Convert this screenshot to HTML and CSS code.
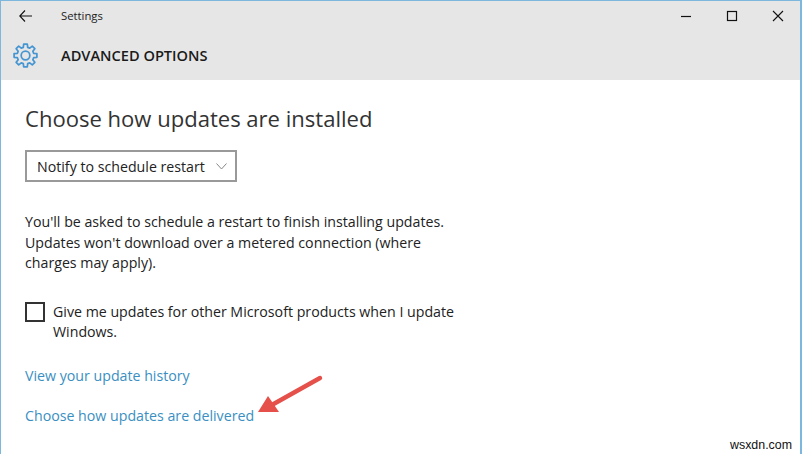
FILE: index.html
```html
<!DOCTYPE html>
<html lang="en">
<head>
  <meta charset="UTF-8" />
  <title>Settings</title>
  <link rel="stylesheet" href="styles.css">
</head>
<body>
  <div class="window">
    <div class="header">
      <div class="titlebar">
        <svg class="back-icon" width="13" height="12" viewBox="0 0 13 12"><path d="M6 .5.8 6 6 11.5M.8 6H13" fill="none" stroke="#111" stroke-width="1.1"/></svg>
        <span class="title">Settings</span>
        <div class="window-buttons">
          <svg width="12" height="12" viewBox="0 0 12 12"><path d="M1 6.5h10" stroke="#111" stroke-width="1.2"/></svg>
          <svg width="12" height="12" viewBox="0 0 12 12"><rect x="1.5" y="1.5" width="9" height="9" fill="none" stroke="#111" stroke-width="1.2"/></svg>
          <svg width="12" height="12" viewBox="0 0 12 12"><path d="M1 1l10 10M11 1 1 11" stroke="#111" stroke-width="1.1"/></svg>
        </div>
      </div>
      <div class="page-head">
        <svg class="gear-icon" width="25" height="25" viewBox="0 0 26 26"><path d="M10.72 4.5 11.12 1.15H14.88L15.28 4.5 17.4 5.38 20.05 3.29 22.71 5.95 20.62 8.6 21.5 10.72 24.85 11.12V14.88L21.5 15.28 20.62 17.4 22.71 20.05 20.05 22.71 17.4 20.62 15.28 21.5 14.88 24.85H11.12L10.72 21.5 8.6 20.62 5.95 22.71 3.29 20.05 5.38 17.4 4.5 15.28 1.15 14.88V11.12L4.5 10.72 5.38 8.6 3.29 5.95 5.95 3.29 8.6 5.38z" fill="none" stroke="#4595d2" stroke-width="1.8" stroke-linejoin="round"/><circle cx="13" cy="13" r="4.5" fill="none" stroke="#4595d2" stroke-width="1.8"/></svg>
        <span class="page-title">ADVANCED OPTIONS</span>
      </div>
    </div>

    <div class="content">
      <h1>Choose how updates are installed</h1>
      <div class="dropdown">
        <span>Notify to schedule restart</span>
        <svg width="11" height="7" viewBox="0 0 11 7"><path d="M.5 .5l5 5.5 5-5.5" fill="none" stroke="#888" stroke-width="1"/></svg>
      </div>
      <p class="note">You'll be asked to schedule a restart to finish installing updates.<br>Updates won't download over a metered connection (where<br>charges may apply).</p>
      <div class="check-row">
        <span class="checkbox"></span>
        <span>Give me updates for other Microsoft products when I update<br>Windows.</span>
      </div>
      <a class="link history" href="#">View your update history</a>
      <a class="link" href="#">Choose how updates are delivered</a>
    </div>

    <svg class="arrow" width="70" height="44" viewBox="0 0 70 44"><path d="M64 6 14 34" stroke="#e5504a" stroke-width="4.4" stroke-linecap="round"/><path d="M2 40 12 24l11 16z" fill="#e5504a"/></svg>
    <span class="watermark">wsxdn.com</span>
  </div>
</body>
</html>
```

FILE: styles.css
```css
html, body {
  margin: 0;
  padding: 0;
}

body {
  font-family: "Open Sans", "Noto Sans", sans-serif;
  color: #222;
  background: #fff;
}

.window {
  position: relative;
  width: 802px;
  height: 454px;
  box-sizing: border-box;
  border: 1px solid #7db7de;
  border-width: 1px 2px 0 1px;
  overflow: hidden;
}

.header {
  background-color: #e6e6e6;
  height: 79px;
}

.titlebar {
  display: flex;
  align-items: center;
  height: 29px;
}

.back-icon {
  margin-left: 18px;
}

.title {
  margin-left: 29px;
  font-size: 11.3px;
  color: #222;
}

.window-buttons {
  margin-left: auto;
  display: flex;
  gap: 34px;
  margin-right: 16px;
}

.page-head {
  display: flex;
  align-items: center;
  height: 50px;
}

.gear-icon {
  margin-left: 11.5px;
}

.page-title {
  margin-left: 23.5px;
  font-size: 14.6px;
  font-weight: 600;
  color: #1a1a1a;
}

.content {
  padding: 22px 0 0 24px;
}

h1 {
  margin: 0 0 16px;
  font-size: 22.05px;
  font-weight: 400;
  line-height: 32px;
  color: #333;
}

.dropdown {
  display: flex;
  align-items: center;
  justify-content: space-between;
  width: 212px;
  height: 32px;
  box-sizing: border-box;
  border: 2px solid #999;
  padding: 0 8px 0 10px;
  font-size: 14.2px;
  color: #222;
}

.note {
  margin: 30px 0 0;
  font-size: 14.2px;
  line-height: 20.5px;
}

.check-row {
  display: flex;
  gap: 8px;
  margin-top: 28px;
  font-size: 14.2px;
  line-height: 20px;
}

.checkbox {
  width: 20px;
  height: 20px;
  box-sizing: border-box;
  border: 2px solid #333;
}

.link {
  display: block;
  color: #3a8fc2;
  font-size: 14.2px;
  line-height: 20px;
  text-decoration: none;
}

.history {
  margin: 24px 0 20px;
}

.arrow {
  position: absolute;
  left: 255px;
  top: 371px;
}

.watermark {
  position: absolute;
  right: 8px;
  top: 437px;
  font-family: "Liberation Sans", sans-serif;
  font-size: 12.4px;
  color: #111;
}
```
